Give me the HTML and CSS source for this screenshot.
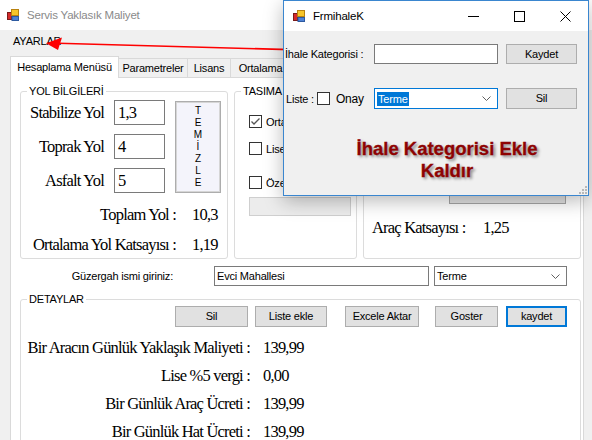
FILE: index.html
```html
<!DOCTYPE html>
<html lang="tr">
<head>
<meta charset="utf-8">
<title>Servis Yaklasık Maliyet</title>
<link rel="stylesheet" href="styles.css">
</head>
<body>
<div class="app">
  <div class="titlebar">
    <svg class="appicon" width="12" height="12" viewBox="0 0 12 12">
      <rect x="0.5" y="3.5" width="4" height="7" fill="#d42a2a" stroke="#7a1a1a"/>
      <rect x="4.5" y="0.5" width="7" height="6" fill="#f7c52a" stroke="#b88210"/>
      <rect x="5" y="7.5" width="6.5" height="4" fill="#4d82d6" stroke="#2d5aa0"/>
    </svg>
    <span class="title">Servis Yaklasık Maliyet</span>
  </div>
  <div class="menubar"><span class="menu-item">AYARLAR</span></div>
  <div class="tabs">
    <div class="tabstrip">
      <div class="tab tab-active">Hesaplama Menüsü</div>
      <div class="tab tab-param">Parametreler</div>
      <div class="tab tab-lisans">Lisans</div>
      <div class="tab tab-ort">Ortalama</div>
    </div>
    <div class="tabpage">
      <div class="top-row">
        <fieldset class="gb gb-yol">
          <legend>YOL BİLGİLERİ</legend>
          <div class="yol-grid">
            <span class="tlabel">Stabilize Yol</span>
            <div class="tbox">1,3</div>
            <div class="btn-temizle">T<br>E<br>M<br>İ<br>Z<br>L<br>E</div>
            <span class="tlabel">Toprak Yol</span>
            <div class="tbox">4</div>
            <span class="tlabel">Asfalt Yol</span>
            <div class="tbox">5</div>
          </div>
          <div class="totals">
            <span class="tlabel">Toplam Yol :</span><span class="tval">10,3</span>
            <span class="tlabel">Ortalama Yol Katsayısı :</span><span class="tval">1,19</span>
          </div>
        </fieldset>
        <fieldset class="gb gb-tasima">
          <legend>TASIMA</legend>
          <div class="cb-list">
            <div class="cb-row">
              <span class="cb cb-checked"><svg width="11" height="11" viewBox="0 0 11 11"><polyline points="1.5,5.5 4,8 9.5,2.5" fill="none" stroke="#555" stroke-width="1.3"/></svg></span>
              <span>Ortalama</span>
            </div>
            <div class="cb-row cb-row2">
              <span class="cb"></span><span>Lise</span>
            </div>
            <div class="cb-row cb-row3">
              <span class="cb"></span><span>Özel</span>
            </div>
            <div class="btn-flat"></div>
          </div>
        </fieldset>
        <fieldset class="gb gb-arac">
          <div class="btn btn-arac"></div>
          <div class="arac-row">
            <span class="tlabel tlabel-left">Araç Katsayısı :</span><span class="tval">1,25</span>
          </div>
        </fieldset>
      </div>
      <div class="route-row">
        <span class="route-label">Güzergah ismi giriniz:</span>
        <div class="field route-text">Evci Mahallesi</div>
        <div class="field combo route-combo"><span>Terme</span>
          <svg width="9" height="5" viewBox="0 0 9 5"><polyline points="0.5,0.5 4.5,4.5 8.5,0.5" fill="none" stroke="#606060"/></svg>
        </div>
      </div>
      <fieldset class="gb gb-detay">
        <legend>DETAYLAR</legend>
        <div class="btn-row">
          <div class="btn b-sil">Sil</div>
          <div class="btn b-liste">Liste ekle</div>
          <div class="btn b-excel">Excele Aktar</div>
          <div class="btn b-goster">Goster</div>
          <div class="btn b-kaydet">kaydet</div>
        </div>
        <div class="detail-grid">
          <span class="tlabel">Bir Aracın Günlük Yaklaşık Maliyeti :</span><span class="tval">139,99</span>
          <span class="tlabel">Lise %5 vergi :</span><span class="tval">0,00</span>
          <span class="tlabel">Bir Günlük Araç Ücreti :</span><span class="tval">139,99</span>
          <span class="tlabel">Bir Günlük Hat Ücreti :</span><span class="tval">139,99</span>
        </div>
      </fieldset>
    </div>
  </div>
</div>

<svg class="arrow" width="592" height="440" viewBox="0 0 592 440">
  <line x1="58" y1="43.3" x2="290" y2="49.6" stroke="#ff0000" stroke-width="1.6"/>
  <polygon points="46,43.2 62,37.5 58,50" fill="#ff0000"/>
</svg>

<div class="dialog">
  <div class="dlg-title">
    <svg class="appicon" width="12" height="12" viewBox="0 0 12 12">
      <rect x="0.5" y="3.5" width="4" height="7" fill="#d42a2a" stroke="#7a1a1a"/>
      <rect x="4.5" y="0.5" width="7" height="6" fill="#f7c52a" stroke="#b88210"/>
      <rect x="5" y="7.5" width="6.5" height="4" fill="#4d82d6" stroke="#2d5aa0"/>
    </svg>
    <span class="dlg-name">FrmihaleK</span>
    <div class="wctl">
      <div class="wbtn"><svg width="11" height="11" viewBox="0 0 11 11"><line x1="0" y1="5.5" x2="11" y2="5.5" stroke="#000"/></svg></div>
      <div class="wbtn"><svg width="11" height="11" viewBox="0 0 11 11"><rect x="0.5" y="0.5" width="10" height="10" fill="none" stroke="#000"/></svg></div>
      <div class="wbtn"><svg width="11" height="11" viewBox="0 0 11 11"><path d="M0.5 0.5 L10.5 10.5 M10.5 0.5 L0.5 10.5" stroke="#000" fill="none"/></svg></div>
    </div>
  </div>
  <div class="dlg-body">
    <div class="dlg-row">
      <span class="dlg-label">İhale Kategorisi :</span>
      <div class="field dlg-field"></div>
      <div class="btn dlg-btn">Kaydet</div>
    </div>
    <div class="dlg-row dlg-row2">
      <div class="dlg-label2">
        <span>Liste :</span>
        <span class="cb cb-dlg"></span>
        <span class="onay">Onay</span>
      </div>
      <div class="field combo combo-focus dlg-field"><span class="sel">Terme</span>
        <svg width="9" height="5" viewBox="0 0 9 5"><polyline points="0.5,0.5 4.5,4.5 8.5,0.5" fill="none" stroke="#606060"/></svg>
      </div>
      <div class="btn dlg-btn">Sil</div>
    </div>
    <div class="bigtext">İhale Kategorisi Ekle<br>Kaldır</div>
  </div>
  <svg class="grip" width="8" height="8" viewBox="0 0 8 8">
    <rect x="6" y="0" width="2" height="2" fill="#b8b8b8"/>
    <rect x="3" y="3" width="2" height="2" fill="#b8b8b8"/>
    <rect x="6" y="3" width="2" height="2" fill="#b8b8b8"/>
    <rect x="0" y="6" width="2" height="2" fill="#b8b8b8"/>
    <rect x="3" y="6" width="2" height="2" fill="#b8b8b8"/>
    <rect x="6" y="6" width="2" height="2" fill="#b8b8b8"/>
  </svg>
</div>
</body>
</html>
```

FILE: styles.css
```css
* { box-sizing: border-box; }
html, body { margin: 0; padding: 0; }
body {
  width: 592px;
  height: 440px;
  overflow: hidden;
  position: relative;
  background: #f0f0f0;
  font-family: "Liberation Sans", Arial, sans-serif;
  font-size: 11px;
  letter-spacing: -0.2px;
  color: #000;
}

/* main window */
.titlebar {
  height: 30px;
  background: #fff;
  display: flex;
  align-items: center;
  padding-left: 7px;
}
.appicon { display: block; margin-right: 8px; flex: none; }
.title { font-size: 11.5px; color: #8a8a8a; }
.menubar { height: 22px; line-height: 22px; padding-left: 13px; }

.tabs { margin: 4px 0 0 10px; width: 574px; }
.tabstrip {
  display: flex;
  align-items: flex-end;
  height: 22px;
  margin-bottom: -1px;
  position: relative;
  z-index: 1;
}
.tab {
  height: 19px;
  margin-bottom: 1px;
  line-height: 18px;
  text-align: center;
  white-space: nowrap;
  overflow: hidden;
  background: #f0f0f0;
  border-top: 1px solid #d9d9d9;
  border-right: 1px solid #d9d9d9;
}
.tab-active {
  width: 109px;
  height: 22px;
  margin-bottom: 0;
  line-height: 21px;
  background: #fff;
  border-left: 1px solid #d9d9d9;
}
.tab-param { width: 69px; }
.tab-lisans { width: 43px; }
.tab-ort { width: 60px; }

.tabpage {
  background: #fff;
  border: 1px solid #d9d9d9;
  height: 370px;
  padding: 7px 0 0 9px;
}

/* group boxes */
.top-row { display: flex; height: 174px; }
.gb {
  margin: 0;
  padding: 0;
  min-width: 0;
  border: 1px solid #dcdcdc;
  border-radius: 3px;
  height: 100%;
}
.gb legend {
  margin-left: 6px;
  padding: 0 2px;
  font-size: 11px;
  line-height: 12px;
}
.gb-yol { width: 208px; }
.gb-tasima { width: 123px; margin-left: 6px; }
.gb-arac { width: 218px; margin-left: 6px; }

.tlabel, .tval, .tbox {
  font-family: "Liberation Serif", "Times New Roman", serif;
  font-size: 16.5px;
  letter-spacing: -0.8px;
  white-space: nowrap;
}
.tlabel { text-align: right; }
.tlabel-left { text-align: left; }

.yol-grid {
  display: grid;
  grid-template-columns: 83px 51px 46px;
  grid-template-rows: 25px 25px 25px;
  column-gap: 10px;
  row-gap: 9px;
  margin-top: 3px;
  align-items: center;
}
.tbox {
  height: 25px;
  border: 1px solid #7a7a7a;
  background: #fff;
  padding-left: 3px;
  line-height: 23px;
}
.btn-temizle {
  grid-column: 3;
  grid-row: 1 / span 3;
  align-self: stretch;
  margin-top: 1px;
  display: grid;
  align-content: center;
  text-align: center;
  font-size: 10px;
  line-height: 12px;
  letter-spacing: 0;
  background: #f4f4fb;
  border: 1px solid #adadad;
  box-shadow: inset 0 0 0 1px #d6d6d6;
}
.totals {
  display: grid;
  grid-template-columns: 155px auto;
  column-gap: 16px;
  grid-auto-rows: 20px;
  row-gap: 10px;
  margin-top: 12px;
  align-items: center;
}

.cb-list {
  display: flex;
  flex-direction: column;
  padding: 18px 0 0 14px;
}
.cb-row {
  display: flex;
  align-items: center;
  gap: 4px;
  height: 13px;
  white-space: nowrap;
}
.cb-row2 { margin-top: 14px; }
.cb-row3 { margin-top: 21px; }
.cb {
  display: block;
  flex: none;
  width: 13px;
  height: 13px;
  border: 1px solid #333;
  background: #fff;
}
.cb svg { display: block; }
.btn-flat {
  margin-top: 8px;
  width: 102px;
  height: 19px;
  background: #ececec;
  border: 1px solid #cfcfcf;
}

.btn {
  height: 21px;
  line-height: 19px;
  text-align: center;
  background: #e1e1e1;
  border: 1px solid #adadad;
  white-space: nowrap;
}
.btn-arac {
  margin: 92px 0 0 85px;
  width: 117px;
  height: 26px;
  background: #e3e3e3;
  border-color: #a6a6a6;
}
.arac-row {
  display: grid;
  grid-template-columns: 96px auto;
  column-gap: 15px;
  height: 20px;
  align-items: center;
  margin-top: 14px;
  padding-left: 8px;
}

/* route row */
.route-row {
  display: flex;
  align-items: center;
  height: 20px;
  margin-top: 7px;
}
.route-label { width: 153px; text-align: right; white-space: nowrap; }
.field {
  height: 20px;
  border: 1px solid #7a7a7a;
  background: #fff;
  padding-left: 2px;
  line-height: 18px;
}
.route-text { margin-left: 41px; width: 215px; }
.route-combo { margin-left: 5px; width: 133px; }
.combo {
  display: flex;
  align-items: center;
  justify-content: space-between;
  padding-right: 6px;
}
.combo svg { display: block; }

/* details */
.gb-detay { width: 561px; height: 160px; margin-top: 7px; }
.btn-row {
  display: flex;
  margin-top: 1px;
  padding-left: 154px;
}
.b-sil { width: 73px; }
.b-liste { width: 72px; margin-left: 7px; }
.b-excel { width: 74px; margin-left: 18px; }
.b-goster { width: 63px; margin-left: 16px; }
.b-kaydet { width: 61px; margin-left: 8px; border: 2px solid #0078d7; line-height: 17px; }
.detail-grid {
  display: grid;
  grid-template-columns: 229px auto;
  column-gap: 13px;
  grid-auto-rows: 28px;
  align-items: center;
  margin-top: 7px;
}

/* red annotation arrow */
.arrow { position: absolute; left: 0; top: 0; z-index: 4; pointer-events: none; }

/* dialog window */
.dialog {
  position: absolute;
  left: 283px;
  top: 0;
  width: 306px;
  height: 196px;
  z-index: 5;
  background: #f0f0f0;
  border: 1px solid #3a86cf;
  box-shadow: 0 5px 18px rgba(0, 0, 0, 0.28);
}
.dlg-title {
  height: 30px;
  background: #fff;
  display: flex;
  align-items: center;
  padding-left: 9px;
}
.dlg-name { font-size: 11.5px; }
.wctl { margin-left: auto; display: flex; height: 30px; }
.wbtn {
  width: 46px;
  height: 30px;
  display: flex;
  align-items: center;
  justify-content: center;
}
.wbtn svg { display: block; }
.dlg-body { padding: 13px 0 0 1px; }
.dlg-row { display: flex; align-items: center; height: 20px; }
.dlg-row2 { margin-top: 24px; height: 21px; }
.dlg-label { width: 89px; white-space: nowrap; }
.dlg-label2 {
  width: 89px;
  display: flex;
  align-items: center;
  padding-left: 1px;
  white-space: nowrap;
}
.cb-dlg { margin-left: 3px; }
.onay { margin-left: 6px; font-size: 12px; }
.dlg-field { width: 124px; }
.dlg-row2 .dlg-field { height: 21px; }
.combo-focus { border-color: #0078d7; }
.sel { background: #0078d7; color: #fff; padding: 0 1px; line-height: 14px; }
.dlg-btn { width: 71px; margin-left: 8px; height: 20px; line-height: 18px; }
.dlg-row2 .dlg-btn { height: 21px; line-height: 19px; }
.bigtext {
  margin: 29px 0 0 40px;
  width: 244px;
  text-align: center;
  font-size: 18.5px;
  font-weight: bold;
  line-height: 22px;
  letter-spacing: 0;
  color: #8e0303;
  -webkit-text-stroke: 0.3px #8e0303;
  text-shadow: 2px 2px 3px rgba(0, 0, 0, 0.45);
}
.grip { position: absolute; right: 1px; bottom: 1px; display: block; }
```
